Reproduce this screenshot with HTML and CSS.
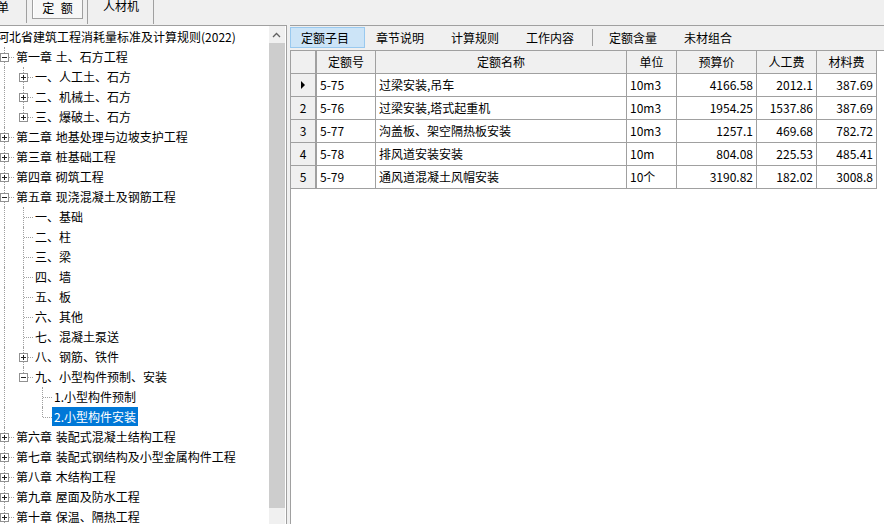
FILE: index.html
```html
<!DOCTYPE html>
<html lang="zh-CN">
<head>
<meta charset="utf-8">
<title>定额</title>
<link rel="stylesheet" href="styles.css">
</head>
<body>
<div class="topbar">
  <div class="tb tb-first">单</div>
  <div class="tb tb-sel">定 额</div>
  <div class="tb tb-sep"></div>
  <div class="tb tb-plain">人材机</div>
</div>
<div class="main">
  <div class="left">
    <div class="tree">
      <div class="row"><span class="lbl root">河北省建筑工程消耗量标准及计算规则(2022)</span></div>
      <div class="row"><span class="c mid"><i class="ex"></i></span><span class="lbl">第一章 土、石方工程</span></div>
      <div class="row"><span class="g v"></span><span class="c mid"><i class="ex plus"></i></span><span class="lbl">一、人工土、石方</span></div>
      <div class="row"><span class="g v"></span><span class="c mid"><i class="ex plus"></i></span><span class="lbl">二、机械土、石方</span></div>
      <div class="row"><span class="g v"></span><span class="c end"><i class="ex plus"></i></span><span class="lbl">三、爆破土、石方</span></div>
      <div class="row"><span class="c mid"><i class="ex plus"></i></span><span class="lbl">第二章 地基处理与边坡支护工程</span></div>
      <div class="row"><span class="c mid"><i class="ex plus"></i></span><span class="lbl">第三章 桩基础工程</span></div>
      <div class="row"><span class="c mid"><i class="ex plus"></i></span><span class="lbl">第四章 砌筑工程</span></div>
      <div class="row"><span class="c mid"><i class="ex"></i></span><span class="lbl">第五章 现浇混凝土及钢筋工程</span></div>
      <div class="row"><span class="g v"></span><span class="c mid"></span><span class="lbl">一、基础</span></div>
      <div class="row"><span class="g v"></span><span class="c mid"></span><span class="lbl">二、柱</span></div>
      <div class="row"><span class="g v"></span><span class="c mid"></span><span class="lbl">三、梁</span></div>
      <div class="row"><span class="g v"></span><span class="c mid"></span><span class="lbl">四、墙</span></div>
      <div class="row"><span class="g v"></span><span class="c mid"></span><span class="lbl">五、板</span></div>
      <div class="row"><span class="g v"></span><span class="c mid"></span><span class="lbl">六、其他</span></div>
      <div class="row"><span class="g v"></span><span class="c mid"></span><span class="lbl">七、混凝土泵送</span></div>
      <div class="row"><span class="g v"></span><span class="c mid"><i class="ex plus"></i></span><span class="lbl">八、钢筋、铁件</span></div>
      <div class="row"><span class="g v"></span><span class="c end"><i class="ex"></i></span><span class="lbl">九、小型构件预制、安装</span></div>
      <div class="row"><span class="g v"></span><span class="g"></span><span class="c mid"></span><span class="lbl">1.小型构件预制</span></div>
      <div class="row"><span class="g v"></span><span class="g"></span><span class="c end"></span><span class="lbl sel">2.小型构件安装</span></div>
      <div class="row"><span class="c mid"><i class="ex plus"></i></span><span class="lbl">第六章 装配式混凝土结构工程</span></div>
      <div class="row"><span class="c mid"><i class="ex plus"></i></span><span class="lbl">第七章 装配式钢结构及小型金属构件工程</span></div>
      <div class="row"><span class="c mid"><i class="ex plus"></i></span><span class="lbl">第八章 木结构工程</span></div>
      <div class="row"><span class="c mid"><i class="ex plus"></i></span><span class="lbl">第九章 屋面及防水工程</span></div>
      <div class="row"><span class="c mid"><i class="ex plus"></i></span><span class="lbl">第十章 保温、隔热工程</span></div>
    </div>
    <div class="scroll">
      <div class="sb-up"><svg width="16" height="17" viewBox="0 0 16 17"><polyline points="4,11 7.5,7.5 11,11" fill="none" stroke="#606060" stroke-width="1.3"/></svg></div>
      <div class="sb-thumb"></div>
    </div>
  </div>
  <div class="splitter"></div>
  <div class="right">
    <div class="tabs">
      <div class="tab sel">定额子目</div>
      <div class="tab">章节说明</div>
      <div class="tab">计算规则</div>
      <div class="tab">工作内容</div>
      <div class="tsep"></div>
      <div class="tab">定额含量</div>
      <div class="tab">未材组合</div>
    </div>
    <div class="grid">
      <div class="gr hdr">
        <div class="cell ind"></div>
        <div class="cell ctr">定额号</div>
        <div class="cell ctr">定额名称</div>
        <div class="cell ctr">单位</div>
        <div class="cell ctr">预算价</div>
        <div class="cell ctr">人工费</div>
        <div class="cell ctr">材料费</div>
      </div>
      <div class="gr">
        <div class="cell ind"><span class="tri"></span></div>
        <div class="cell">5-75</div>
        <div class="cell">过梁安装,吊车</div>
        <div class="cell">10m3</div>
        <div class="cell num">4166.58</div>
        <div class="cell num">2012.1</div>
        <div class="cell num">387.69</div>
      </div>
      <div class="gr">
        <div class="cell ind">2</div>
        <div class="cell">5-76</div>
        <div class="cell">过梁安装,塔式起重机</div>
        <div class="cell">10m3</div>
        <div class="cell num">1954.25</div>
        <div class="cell num">1537.86</div>
        <div class="cell num">387.69</div>
      </div>
      <div class="gr">
        <div class="cell ind">3</div>
        <div class="cell">5-77</div>
        <div class="cell">沟盖板、架空隔热板安装</div>
        <div class="cell">10m3</div>
        <div class="cell num">1257.1</div>
        <div class="cell num">469.68</div>
        <div class="cell num">782.72</div>
      </div>
      <div class="gr">
        <div class="cell ind">4</div>
        <div class="cell">5-78</div>
        <div class="cell">排风道安装安装</div>
        <div class="cell">10m</div>
        <div class="cell num">804.08</div>
        <div class="cell num">225.53</div>
        <div class="cell num">485.41</div>
      </div>
      <div class="gr">
        <div class="cell ind">5</div>
        <div class="cell">5-79</div>
        <div class="cell">通风道混凝土风帽安装</div>
        <div class="cell">10个</div>
        <div class="cell num">3190.82</div>
        <div class="cell num">182.02</div>
        <div class="cell num">3008.8</div>
      </div>
    </div>
  </div>
</div>
</body>
</html>
```
FILE: styles.css
```css
* { box-sizing: border-box; margin: 0; padding: 0; }
html, body { width: 884px; height: 524px; overflow: hidden; }
body {
  font-family: "Noto Sans CJK SC", "Microsoft YaHei", sans-serif;
  font-size: 12px;
  color: #000;
  background: #f0f0f0;
}

/* top bar */
.topbar { height: 25px; display: flex; align-items: flex-start; background: #f0f0f0; overflow: hidden; }
.tb { white-space: nowrap; }
.tb-first { margin-left: -3px; width: 30px; height: 23px; line-height: 14px; border-right: 1px solid #a0a0a0; }
.tb-sel {
  margin-left: 5px; margin-top: -1px; width: 51px; height: 20px;
  border: 1px solid #a0a0a0; background: #f7f7f7;
  box-shadow: inset 1px 0 #fff;
  text-align: center; line-height: 16px; word-spacing: 4px;
}
.tb-sep { margin-left: 4px; width: 1px; height: 24px; background: #a0a0a0; }
.tb-plain { margin-left: 15px; width: 51px; height: 24px; line-height: 12px; border-right: 1px solid #a0a0a0; }

/* main area */
.main { display: flex; height: 499px; }
.left {
  display: flex; width: 287px; background: #fff;
  border-top: 1px solid #a0a0a0; border-right: 1px solid #a0a0a0;
  padding-right: 1px;
}
.tree { width: 269px; overflow: hidden; padding-top: 1px; margin-left: -5px; padding-left: 5px; }
.tree { width: 274px; }
.row { display: flex; height: 20px; margin-left: -5px; white-space: nowrap; }
.g, .c { position: relative; width: 19px; height: 20px; flex: none; }
.g.v::before, .c::before {
  content: ""; position: absolute; left: 9px; top: 0; height: 20px;
  border-left: 1px dotted #a0a0a0;
}
.c.end::before { height: 10px; }
.c::after {
  content: ""; position: absolute; left: 10px; top: 10px; width: 9px;
  border-top: 1px dotted #a0a0a0;
}
.ex {
  position: absolute; left: 5px; top: 6px; width: 9px; height: 9px;
  border: 1px solid #919191; background: #fff; z-index: 1;
}
.ex::before {
  content: ""; position: absolute; left: 1px; top: 3px; width: 5px; height: 1px; background: #222;
}
.ex.plus::after {
  content: ""; position: absolute; left: 3px; top: 1px; width: 1px; height: 5px; background: #222;
}
.lbl { height: 19px; line-height: 19px; padding: 0 2px; word-spacing: 1px; }
.lbl.root { margin-left: 2px; padding: 0; }
.lbl.sel { background: #0078d7; color: #fff; }

.scroll { width: 16px; background: #f0f0f0; display: flex; flex-direction: column; flex: none; }
.sb-up { height: 17px; }
.sb-up svg { display: block; }
.sb-thumb { height: 465px; background: #cdcdcd; }

.splitter { width: 3px; background: #f0f0f0; flex: none; }

.right { flex: 1; display: flex; flex-direction: column; border-top: 1px solid #a0a0a0; background: #f0f0f0; }
.tabs { display: flex; height: 24px; padding-top: 1px; }
.tab {
  width: 75px; height: 21px; border: 1px solid transparent;
  padding-left: 10px; line-height: 19px; white-space: nowrap;
}
.tab.sel { background: #cce4f7; border-color: #99c9ef; }
.tsep { width: 1px; height: 17px; margin: 2px 5px 0 2px; background: #a0a0a0; }

.grid { flex: 1; background: #fff; border-left: 1px solid #a0a0a0; border-top: 1px solid #a0a0a0; }
.gr { display: grid; grid-template-columns: 26px 59px 251px 50px 80px 60px 60px; height: 23px; }
.cell {
  border-right: 1px solid #a0a0a0; border-bottom: 1px solid #a0a0a0;
  padding: 0 3px; line-height: 22px; white-space: nowrap; overflow: hidden; background: #fff;
}
.hdr .cell { background: #f0f0f0; }
.cell.ind { background: #f0f0f0; border-right: 2px solid #a0a0a0; text-align: center; padding: 0; display: flex; align-items: center; justify-content: center; }
.cell.ctr { text-align: center; }
.cell.num { text-align: right; padding-right: 3px; }
.tri {
  width: 0; height: 0; margin-left: -1px;
  border-left: 4px solid #000; border-top: 4px solid transparent; border-bottom: 4px solid transparent;
}
```
